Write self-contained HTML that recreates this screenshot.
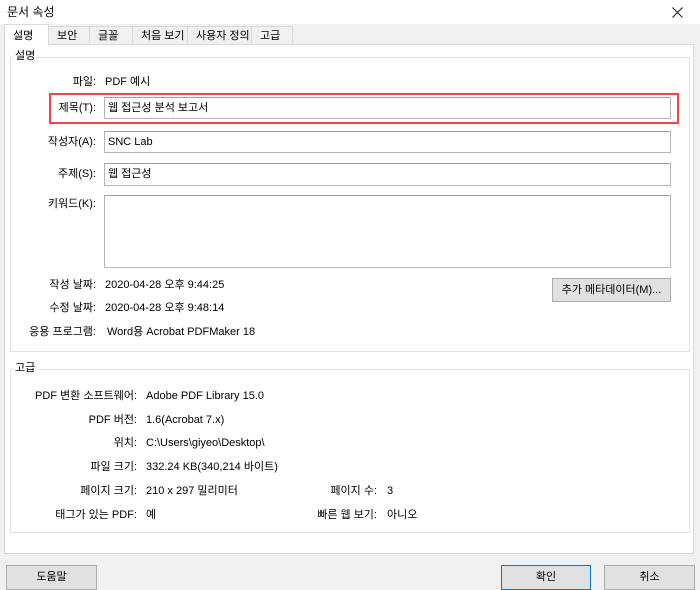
<!DOCTYPE html>
<html><head><meta charset="utf-8"><style>
*{box-sizing:border-box;margin:0;padding:0}
body{width:700px;height:590px;background:#f0f0f0;font-family:"Liberation Sans","Noto Sans CJK KR",sans-serif;font-size:11px;color:#000;position:relative;overflow:hidden}
.a{position:absolute;white-space:nowrap;line-height:14px}
.title{left:0;top:0;width:700px;height:24px;background:#fff}
.tab{top:26px;height:18px;background:#f0f0f0;border:1px solid #d9d9d9;border-bottom:none;padding:2px 0 0 8px}
.panel{left:4px;top:44px;width:690px;height:510px;background:#fff;border:1px solid #d9d9d9}
.grp{border:1px solid #e3e3e3}
.lbl{text-align:right}
.fld{background:#fff;border:1px solid #b5b5b5;border-top-color:#a0a0a0;padding:3px 3px}
.btn{background:#e1e1e1;border:1px solid #adadad;text-align:center;line-height:23px}
</style></head><body>
<div class="a title"></div>
<div class="a" style="left:7px;top:5px;font-size:12px">문서 속성</div>
<svg class="a" style="left:672px;top:7px" width="11" height="11" viewBox="0 0 11 11"><path d="M0.5 0.5L10.5 10.5M10.5 0.5L0.5 10.5" stroke="#222" stroke-width="1.1"/></svg>
<div class="a tab" style="left:48px;width:42px">보안</div>
<div class="a tab" style="left:89px;width:44px">글꼴</div>
<div class="a tab" style="left:132px;width:56px">처음 보기</div>
<div class="a tab" style="left:187px;width:65px">사용자 정의</div>
<div class="a tab" style="left:251px;width:42px">고급</div>
<div class="a panel"></div>
<div class="a" style="left:4px;top:24px;width:45px;height:22px;background:#fff;border:1px solid #d9d9d9;border-bottom:none;padding:4px 0 0 8px">설명</div>
<div class="a grp" style="left:10px;top:57px;width:680px;height:295px"></div>
<div class="a" style="left:13px;top:49px;background:#fff;padding:0 2px">설명</div>
<div class="a grp" style="left:10px;top:369px;width:680px;height:164px"></div>
<div class="a" style="left:13px;top:361px;background:#fff;padding:0 2px">고급</div>

<div class="a lbl" style="right:604px;top:75px">파일:</div><div class="a" style="left:105px;top:75px">PDF 예시</div>
<div class="a" style="left:49px;top:93px;width:630px;height:31px;border:2px solid #f0474a"></div>
<div class="a lbl" style="right:604px;top:101px">제목(T):</div>
<div class="a fld" style="left:104px;top:97px;width:567px;height:22px">웹 접근성 분석 보고서</div>
<div class="a lbl" style="right:604px;top:135px">작성자(A):</div>
<div class="a fld" style="left:104px;top:131px;width:567px;height:22px">SNC Lab</div>
<div class="a lbl" style="right:604px;top:167px">주제(S):</div>
<div class="a fld" style="left:104px;top:163px;width:567px;height:23px">웹 접근성</div>
<div class="a lbl" style="right:604px;top:197px">키워드(K):</div>
<div class="a fld" style="left:104px;top:195px;width:567px;height:73px"></div>
<div class="a lbl" style="right:604px;top:278px">작성 날짜:</div><div class="a" style="left:105px;top:278px">2020-04-28 오후 9:44:25</div>
<div class="a lbl" style="right:604px;top:301px">수정 날짜:</div><div class="a" style="left:105px;top:301px">2020-04-28 오후 9:48:14</div>
<div class="a lbl" style="right:604px;top:325px">응용 프로그램:</div><div class="a" style="left:107px;top:325px">Word용 Acrobat PDFMaker 18</div>
<div class="a btn" style="left:552px;top:278px;width:119px;height:24px">추가 메타데이터(M)...</div>

<div class="a lbl" style="right:563px;top:389px">PDF 변환 소프트웨어:</div><div class="a" style="left:146px;top:389px">Adobe PDF Library 15.0</div>
<div class="a lbl" style="right:563px;top:413px">PDF 버전:</div><div class="a" style="left:146px;top:413px">1.6(Acrobat 7.x)</div>
<div class="a lbl" style="right:563px;top:436px">위치:</div><div class="a" style="left:146px;top:436px">C:\Users\giyeo\Desktop\</div>
<div class="a lbl" style="right:563px;top:460px">파일 크기:</div><div class="a" style="left:146px;top:460px">332.24 KB(340,214 바이트)</div>
<div class="a lbl" style="right:563px;top:484px">페이지 크기:</div><div class="a" style="left:146px;top:484px">210 x 297 밀리미터</div>
<div class="a lbl" style="right:563px;top:508px">태그가 있는 PDF:</div><div class="a" style="left:146px;top:508px">예</div>
<div class="a lbl" style="right:323px;top:484px">페이지 수:</div><div class="a" style="left:387px;top:484px">3</div>
<div class="a lbl" style="right:323px;top:508px">빠른 웹 보기:</div><div class="a" style="left:387px;top:508px">아니오</div>

<div class="a btn" style="left:6px;top:565px;width:91px;height:25px">도움말</div>
<div class="a btn" style="left:501px;top:565px;width:90px;height:25px;border-color:#0078d7">확인</div>
<div class="a btn" style="left:604px;top:565px;width:91px;height:25px">취소</div>
</body></html>
